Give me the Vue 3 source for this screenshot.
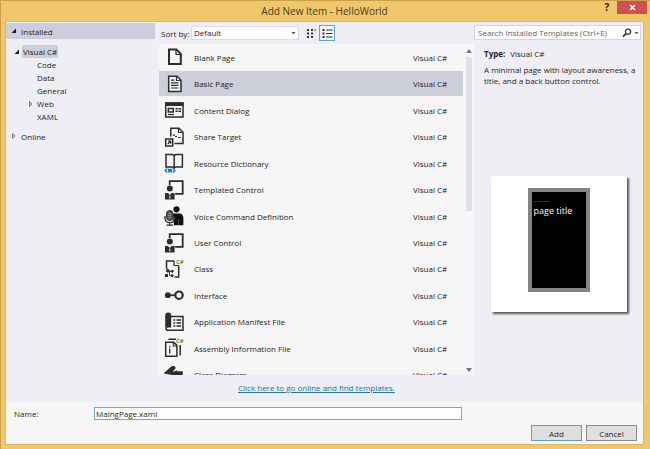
<script setup>
import { ref } from 'vue'

const templates = [
  { name: 'Blank Page', icon: 'blank' },
  { name: 'Basic Page', icon: 'basic' },
  { name: 'Content Dialog', icon: 'dialog' },
  { name: 'Share Target', icon: 'share' },
  { name: 'Resource Dictionary', icon: 'book' },
  { name: 'Templated Control', icon: 'control' },
  { name: 'Voice Command Definition', icon: 'voice' },
  { name: 'User Control', icon: 'control' },
  { name: 'Class', icon: 'class' },
  { name: 'Interface', icon: 'interface' },
  { name: 'Application Manifest File', icon: 'manifest' },
  { name: 'Assembly Information File', icon: 'assembly' },
  { name: 'Class Diagram', icon: 'diagram' },
]
const selected = ref('Basic Page')
const fileName = ref('MaingPage.xaml')
const search = ref('')
const sort = ref('Default')
</script>

<template>
  <div class="window">
    <header class="titlebar">
      <h1>Add New Item - HelloWorld</h1>
      <div class="window-buttons">
        <button class="help" type="button" aria-label="Help">?</button>
        <button class="close" type="button" aria-label="Close">
          <svg width="7" height="7" viewBox="0 0 7 7"><path d="M1 1l5 5M6 1l-5 5" stroke="#fff" stroke-width="1.5" /></svg>
        </button>
      </div>
    </header>

    <main class="client">
      <div class="body">
        <nav class="tree" aria-label="Categories">
          <button type="button" class="node root active">
            <svg class="arrow" viewBox="0 0 6 6"><path d="M5 0.5v4.500h-4.500z" fill="#1e1e1e" /></svg>Installed
          </button>
          <ul>
            <li>
              <button type="button" class="node lang">
                <svg class="arrow" viewBox="0 0 6 6"><path d="M5 0.5v4.500h-4.500z" fill="#1e1e1e" /></svg><span class="mark">Visual C#</span>
              </button>
            </li>
            <li><button type="button" class="node child">Code</button></li>
            <li><button type="button" class="node child">Data</button></li>
            <li><button type="button" class="node child">General</button></li>
            <li>
              <button type="button" class="node child">
                <svg class="arrow" viewBox="0 0 6 6"><path d="M1.500 0.600l2.500 2.400l-2.500 2.400z" fill="none" stroke="#555" stroke-width="0.8" /></svg>Web
              </button>
            </li>
            <li><button type="button" class="node child">XAML</button></li>
          </ul>
          <button type="button" class="node root">
            <svg class="arrow" viewBox="0 0 6 6"><path d="M1.500 0.600l2.500 2.400l-2.500 2.400z" fill="none" stroke="#555" stroke-width="0.8" /></svg>Online
          </button>
        </nav>

        <section class="center">
          <div class="toolbar">
            <label for="sort">Sort by:</label>
            <div class="select">
              <select id="sort" v-model="sort"><option>Default</option></select>
              <svg width="5" height="3" viewBox="0 0 5 3"><path d="M0.500 0h4l-2 2.500z" fill="#555" /></svg>
            </div>
            <button type="button" class="view" aria-label="Small icons">
              <svg width="11" height="11" viewBox="0 0 11 11" fill="#333">
                <path d="M1 1h2v2h-2zM5 1h2v2h-2zM1 4.500h2v2h-2zM5 4.500h2v2h-2zM1 8h2v2h-2zM5 8h2v2h-2z" />
                <path d="M8.500 1.500h1.500v1.500h-1.500z" fill="none" stroke="#888" stroke-width="0.6" />
              </svg>
            </button>
            <button type="button" class="view on" aria-label="List">
              <svg width="11" height="11" viewBox="0 0 11 11" fill="#333">
                <path d="M0.500 1h2v2h-2zM0.500 4.500h2v2h-2zM0.500 8h2v2h-2z" />
                <path d="M4 1.500h6.500v1h-6.500zM4 5h6.500v1h-6.500zM4 8.500h6.500v1h-6.500z" />
              </svg>
            </button>
          </div>

          <div class="list">
            <ul class="rows">
              <li v-for="t in templates" :key="t.name">
                <button type="button" class="row" :class="{ selected: t.name === selected }" @click="selected = t.name">
                  <svg class="icon" viewBox="0 0 20 20" fill="none" stroke="#2d2d2d" stroke-width="1.5">
                    <g v-if="t.icon === 'blank'">
                      <path d="M5 2.500h7.500l4.300 4.300v10.200h-11.800z" stroke-width="2" />
                      <path d="M12 3v4.500h4.500" stroke-width="1.200" />
                    </g>
                    <g v-else-if="t.icon === 'basic'">
                      <path d="M4.700 2.200h8.300l4 4v11.300h-12.300z" fill="#f6f6f6" />
                      <path d="M12.500 2.500v4h4.300M7 6.200h3.500M7 8.800h7.500M7 11.400h7.500M7 14h7.500" stroke-width="1.200" />
                    </g>
                    <g v-else-if="t.icon === 'dialog'">
                      <path d="M1.700 3h17.300v14h-17.300z" />
                      <path d="M1 4.200h18.700" stroke-width="3.600" />
                      <path d="M4.300 8.500h5v3.500h-5z" />
                      <path d="M11.500 8.800h2.300M14.500 8.800h2.500M11.500 11.300h2.300M14.500 11.300h2.500" stroke-width="1.500" />
                      <path d="M4 14.500h6" stroke-width="1.200" />
                    </g>
                    <g v-else-if="t.icon === 'share'">
                      <path d="M6.800 9.500v-8.300h8.200l4 4v11.300h-8.500" />
                      <path d="M14.500 1.500v4h4M8.800 8.200h2.200M11 9.500h2M14 10.500h2.500" stroke-width="1.200" />
                      <path d="M1.700 12h7v7h-7z" />
                      <path d="M3.800 17l3-3M4.200 14.200h2.500v2.600" stroke-width="1.200" />
                    </g>
                    <g v-else-if="t.icon === 'book'">
                      <path d="M2 1.500h6.500l1.700 1l1.700-1h6.500v12.500h-6.500l-1.700 1.200l-1.700-1.200h-6.500zM10.200 2.500v12" />
                      <path d="M3.200 15.500l-2 2l2 2M8.800 15.500l2 2l-2 2" stroke="#1682c4" />
                      <path d="M4 15.800h4v3.500h-4z" fill="#1682c4" stroke="none" />
                    </g>
                    <g v-else-if="t.icon === 'control'">
                      <path d="M5.700 5v-3.800h13v12.600h-7.500" stroke-width="1.800" />
                      <circle cx="5.800" cy="8.600" r="3" fill="#2d2d2d" stroke="none" />
                      <path d="M1 13h3l1.800 2l1.800-2h3v6.500h-9.600z" fill="#2d2d2d" stroke="none" />
                      <path d="M5.800 15.500v3" stroke="#f6f6f6" stroke-width="1" />
                    </g>
                    <g v-else-if="t.icon === 'voice'">
                      <circle cx="12.500" cy="3.300" r="3.100" fill="#111" stroke="none" />
                      <path d="M9 7.500h7.500q2.700 1 2.900 4.500v7.300h-9.500z" fill="#111" stroke="none" />
                      <path d="M14.500 13v6" stroke="#777" stroke-width="0.6" />
                      <rect x="2.500" y="4.500" width="6.500" height="10" rx="3.200" fill="#555" stroke="#2d2d2d" stroke-width="1" />
                      <path d="M1 10v2.500q0.500 4 4.800 4.200q4.200-0.200 4.700-4.200v-2.500M5.800 16.500v2.500M2.500 19.200h6.500" stroke-width="1.300" />
                      <path d="M4 7.500h3.500M4 9.500h3.500M4 11.500h3.500" stroke="#999" stroke-width="0.700" />
                    </g>
                    <g v-else-if="t.icon === 'class'">
                      <path d="M2.500 10v-8h7.500M14.700 6.500v11.500h-4" />
                      <path d="M10 2v4.500h4.700" stroke-width="1.200" />
                      <path d="M3.500 9.500l2.500 2l-2 2.500l-2.500-2zM8 10.500l2 1.500l-1.500 2l-2-1.500zM8 15l2 1.500l-1.500 2l-2-1.500zM1 15h3v3h-3z" fill="#2d2d2d" stroke="none" />
                      <path d="M4.500 12.500h3M5.500 12.500v4h2" stroke-width="0.900" />
                      <text class="tag" x="12" y="5">C#</text>
                    </g>
                    <g v-else-if="t.icon === 'interface'">
                      <circle cx="3.800" cy="10.200" r="2.900" fill="#2d2d2d" stroke="none" />
                      <path d="M5 10.200h6.500" stroke-width="1.800" />
                      <circle cx="15" cy="10.200" r="3.700" stroke-width="2.200" />
                    </g>
                    <g v-else-if="t.icon === 'manifest'">
                      <path d="M1.200 3.500q0-3 3-3t3 3v12h-3q-1.800 0-1.800 2q-1.200-0.500-1.200-2z" fill="#2d2d2d" stroke="none" />
                      <path d="M7 4.500h12v13.800h-15q-2 0-2-1.800" />
                      <path d="M9.300 8h2M12.500 8h4.500M9.300 11h2M12.500 11h4.500M9.300 14h2M12.500 14h4.500" stroke-width="1.300" />
                    </g>
                    <g v-else-if="t.icon === 'assembly'">
                      <path d="M1.700 4.200h8l3.200 3.200v10.900h-11.200z" />
                      <path d="M9.300 4.500v3.500h3.500" stroke-width="1.100" />
                      <path d="M4.500 1.300h7.500M16.200 7v10.500" stroke-width="1.500" />
                      <path d="M5.700 8v1.500M5.700 10.500v5" stroke-width="1.300" />
                      <text class="tag" x="12" y="5">C#</text>
                    </g>
                    <g v-else>
                      <path d="M1 8l7-6q2-1 3 1l-5 6zM9 8l4-2M12 7h6v6h-6z" fill="#2d2d2d" />
                      <path d="M4 7l8 2M8 6v9h4" stroke-width="2.400" />
                    </g>
                  </svg>
                  <span class="name">{{ t.name }}</span>
                  <span class="kind">Visual C#</span>
                </button>
              </li>
            </ul>
            <div class="scrollbar">
              <svg width="6" height="4" viewBox="0 0 6 4"><path d="M3 0l3 4h-6z" fill="#777" /></svg>
              <div class="track"><div class="thumb"></div></div>
              <svg width="6" height="4" viewBox="0 0 6 4"><path d="M3 4l3-4h-6z" fill="#777" /></svg>
            </div>
          </div>

          <p class="online"><a href="#">Click here to go online and find templates.</a></p>
        </section>

        <aside class="details">
          <div class="search">
            <input v-model="search" type="text" placeholder="Search Installed Templates (Ctrl+E)" aria-label="Search Installed Templates" />
            <button type="button" aria-label="Search">
              <svg width="17" height="10" viewBox="0 0 17 10" fill="none" stroke="#333">
                <circle cx="6" cy="3.700" r="2.600" stroke-width="1.300" />
                <path d="M4 5.700l-3 3" stroke-width="1.800" />
                <path d="M12.500 4h4l-2 2.200z" fill="#555" stroke="none" />
              </svg>
            </button>
          </div>
          <div class="info">
            <p><b>Type:</b><span>Visual C#</span></p>
            <p class="description">A minimal page with layout awareness, a title, and a back button control.</p>
          </div>
          <div class="preview">
            <div class="phone">
              <small>MY APPLICATION</small>
              <div>page title</div>
            </div>
          </div>
        </aside>
      </div>

      <form class="footer" @submit.prevent>
        <div class="field">
          <label for="file-name">Name:</label>
          <input id="file-name" v-model="fileName" type="text" />
        </div>
        <div class="actions">
          <button type="submit" class="primary">Add</button>
          <button type="button">Cancel</button>
        </div>
      </form>
    </main>
  </div>
</template>

<style>
body {
  margin: 0;
}
</style>

<style scoped>
* {
  box-sizing: border-box;
}
.window {
  display: flex;
  flex-direction: column;
  height: 100vh;
  min-height: 400px;
  padding: 0 6px 4px 4px;
  background: #f0c869;
  border: solid #c9a14c;
  border-width: 1px 0 0 1px;
  color: #1e1e1e;
  font: 8px/13px "Open Sans", "Noto Sans", sans-serif;
}
button,
input,
select {
  margin: 0;
  padding: 0;
  border: 0;
  border-radius: 0;
  background: none;
  color: inherit;
  font: inherit;
}
ul,
p,
h1 {
  margin: 0;
  padding: 0;
  list-style: none;
}
.titlebar {
  display: grid;
  grid-template-columns: 1fr auto 1fr;
  flex: none;
  height: 20px;
}
h1 {
  grid-column: 2;
  color: #4a3a18;
  font-size: 10px;
  font-weight: 400;
  line-height: 20px;
}
.window-buttons {
  display: flex;
  justify-content: flex-end;
  align-items: flex-start;
  margin-right: -3px;
}
.help {
  width: 20px;
  height: 13px;
  font-size: 10px;
  font-weight: 700;
}
.close {
  display: grid;
  place-items: center;
  width: 30px;
  height: 13px;
  background: #cf5050;
}
.client {
  display: flex;
  flex: 1;
  flex-direction: column;
  min-height: 0;
  border: 1px solid #dcb865;
  background: #f6f6f6;
}
.body {
  display: grid;
  flex: 1;
  grid-template-columns: 149px 1fr 169px;
  min-height: 0;
  background: #eeeef4;
}
.tree {
  padding-top: 1px;
}
.node {
  position: relative;
  display: flex;
  align-items: center;
  width: 100%;
  height: 13px;
  text-align: left;
}
.node.root {
  gap: 4px;
  padding-left: 5px;
  height: 16px;
}
.node.active {
  background: #cccedb;
}
.node.lang {
  gap: 2px;
  padding-left: 8px;
}
.node.child {
  padding-left: 31px;
}
.arrow {
  width: 6px;
  height: 6px;
}
.child .arrow {
  position: absolute;
  left: 22px;
}
.mark {
  padding: 0 1px;
  background: #ccceda;
}
.tree ul {
  padding: 6px 0 5px;
}
.center {
  display: flex;
  flex-direction: column;
  min-width: 0;
  padding-left: 4px;
}
.toolbar {
  display: flex;
  align-items: center;
  height: 22px;
  padding-left: 2px;
}
.toolbar label {
  width: 30px;
  white-space: nowrap;
}
.select {
  display: grid;
  align-items: center;
  width: 108px;
  height: 14px;
  margin-right: 4px;
  border: 1px solid #dcdce4;
  background: #fcfcfc;
}
.select select,
.select svg {
  grid-area: 1 / 1;
}
.select select {
  width: 100%;
  height: 12px;
  padding-left: 2px;
  appearance: none;
  line-height: 12px;
}
.select svg {
  justify-self: end;
  margin-right: 2px;
  pointer-events: none;
}
.view {
  display: grid;
  place-items: center;
  width: 16px;
  height: 16px;
}
.view.on {
  border: 1px solid #5aa7d6;
  background: #f6f6f9;
}
.list {
  display: flex;
  flex: 1;
  min-height: 0;
  background: #f6f6f6;
}
.rows {
  display: grid;
  flex: 1;
  grid-auto-rows: 8%;
  height: 100%;
  overflow: hidden;
}
.rows li {
  display: flex;
  padding: 1px 0;
}
.row {
  display: flex;
  flex: 1;
  align-items: center;
  padding: 0 14px 0 5px;
  text-align: left;
}
.row.selected {
  background: #ccceda;
}
.icon {
  width: 20px;
  height: 20px;
  margin-right: 10px;
}
.name {
  flex: 1;
}
.kind {
  width: 36px;
}
.tag {
  fill: #2f9e44;
  stroke: none;
  font: 700 6px "Open Sans", sans-serif;
}
.scrollbar {
  display: flex;
  flex-direction: column;
  align-items: center;
  gap: 4px;
  width: 11px;
  padding: 5px 0 3px;
}
.track {
  flex: 1;
  width: 6px;
}
.thumb {
  height: 50%;
  background: #e0e1e8;
}
.online {
  height: 27px;
  line-height: 26px;
  text-align: center;
}
a {
  color: #2173a8;
}
.details {
  display: flex;
  flex-direction: column;
  min-width: 0;
}
.search {
  display: flex;
  align-items: center;
  height: 15px;
  margin: 3px 2px 0 0;
  border: 1px solid #d4d5de;
  background: #fcfcfc;
}
.search input {
  flex: 1;
  min-width: 0;
  padding-left: 3px;
}
.search input::placeholder {
  color: #666;
  opacity: 1;
}
.search button {
  display: flex;
  margin-right: 1px;
}
.info {
  padding: 8px 4px 0 10px;
  line-height: 11px;
}
.info b {
  margin-right: 5px;
}
.info .description {
  padding-top: 5px;
}
.preview {
  display: flex;
  justify-content: center;
  width: 136px;
  height: 136px;
  margin: 90px auto 0;
  padding: 12px;
  background: #fff;
  box-shadow: 2px 2px 2px #555;
}
.phone {
  width: 62px;
  height: 104px;
  padding: 8px 2px;
  border: 4px solid #858585;
  background: #000;
  color: #fff;
  font-size: 9px;
  line-height: 13px;
  white-space: nowrap;
}
.phone small {
  display: block;
  color: #aaa;
  font-size: 2px;
  line-height: 4px;
}
.footer {
  flex: none;
  padding: 5px 6px 3px 8px;
}
.field {
  display: flex;
  align-items: center;
}
.field label {
  width: 80px;
}
.field input {
  width: 59%;
  height: 13px;
  padding-left: 1px;
  border: 1px solid #6caed0;
  background: #fff;
}
.actions {
  display: flex;
  justify-content: flex-end;
  gap: 4px;
  margin-top: 5px;
}
.actions button {
  width: 51px;
  height: 16px;
  border: 1px solid #8c8c8c;
  background: #dfdfdf;
}
.actions .primary {
  border-color: #55a2cf;
}
</style>
